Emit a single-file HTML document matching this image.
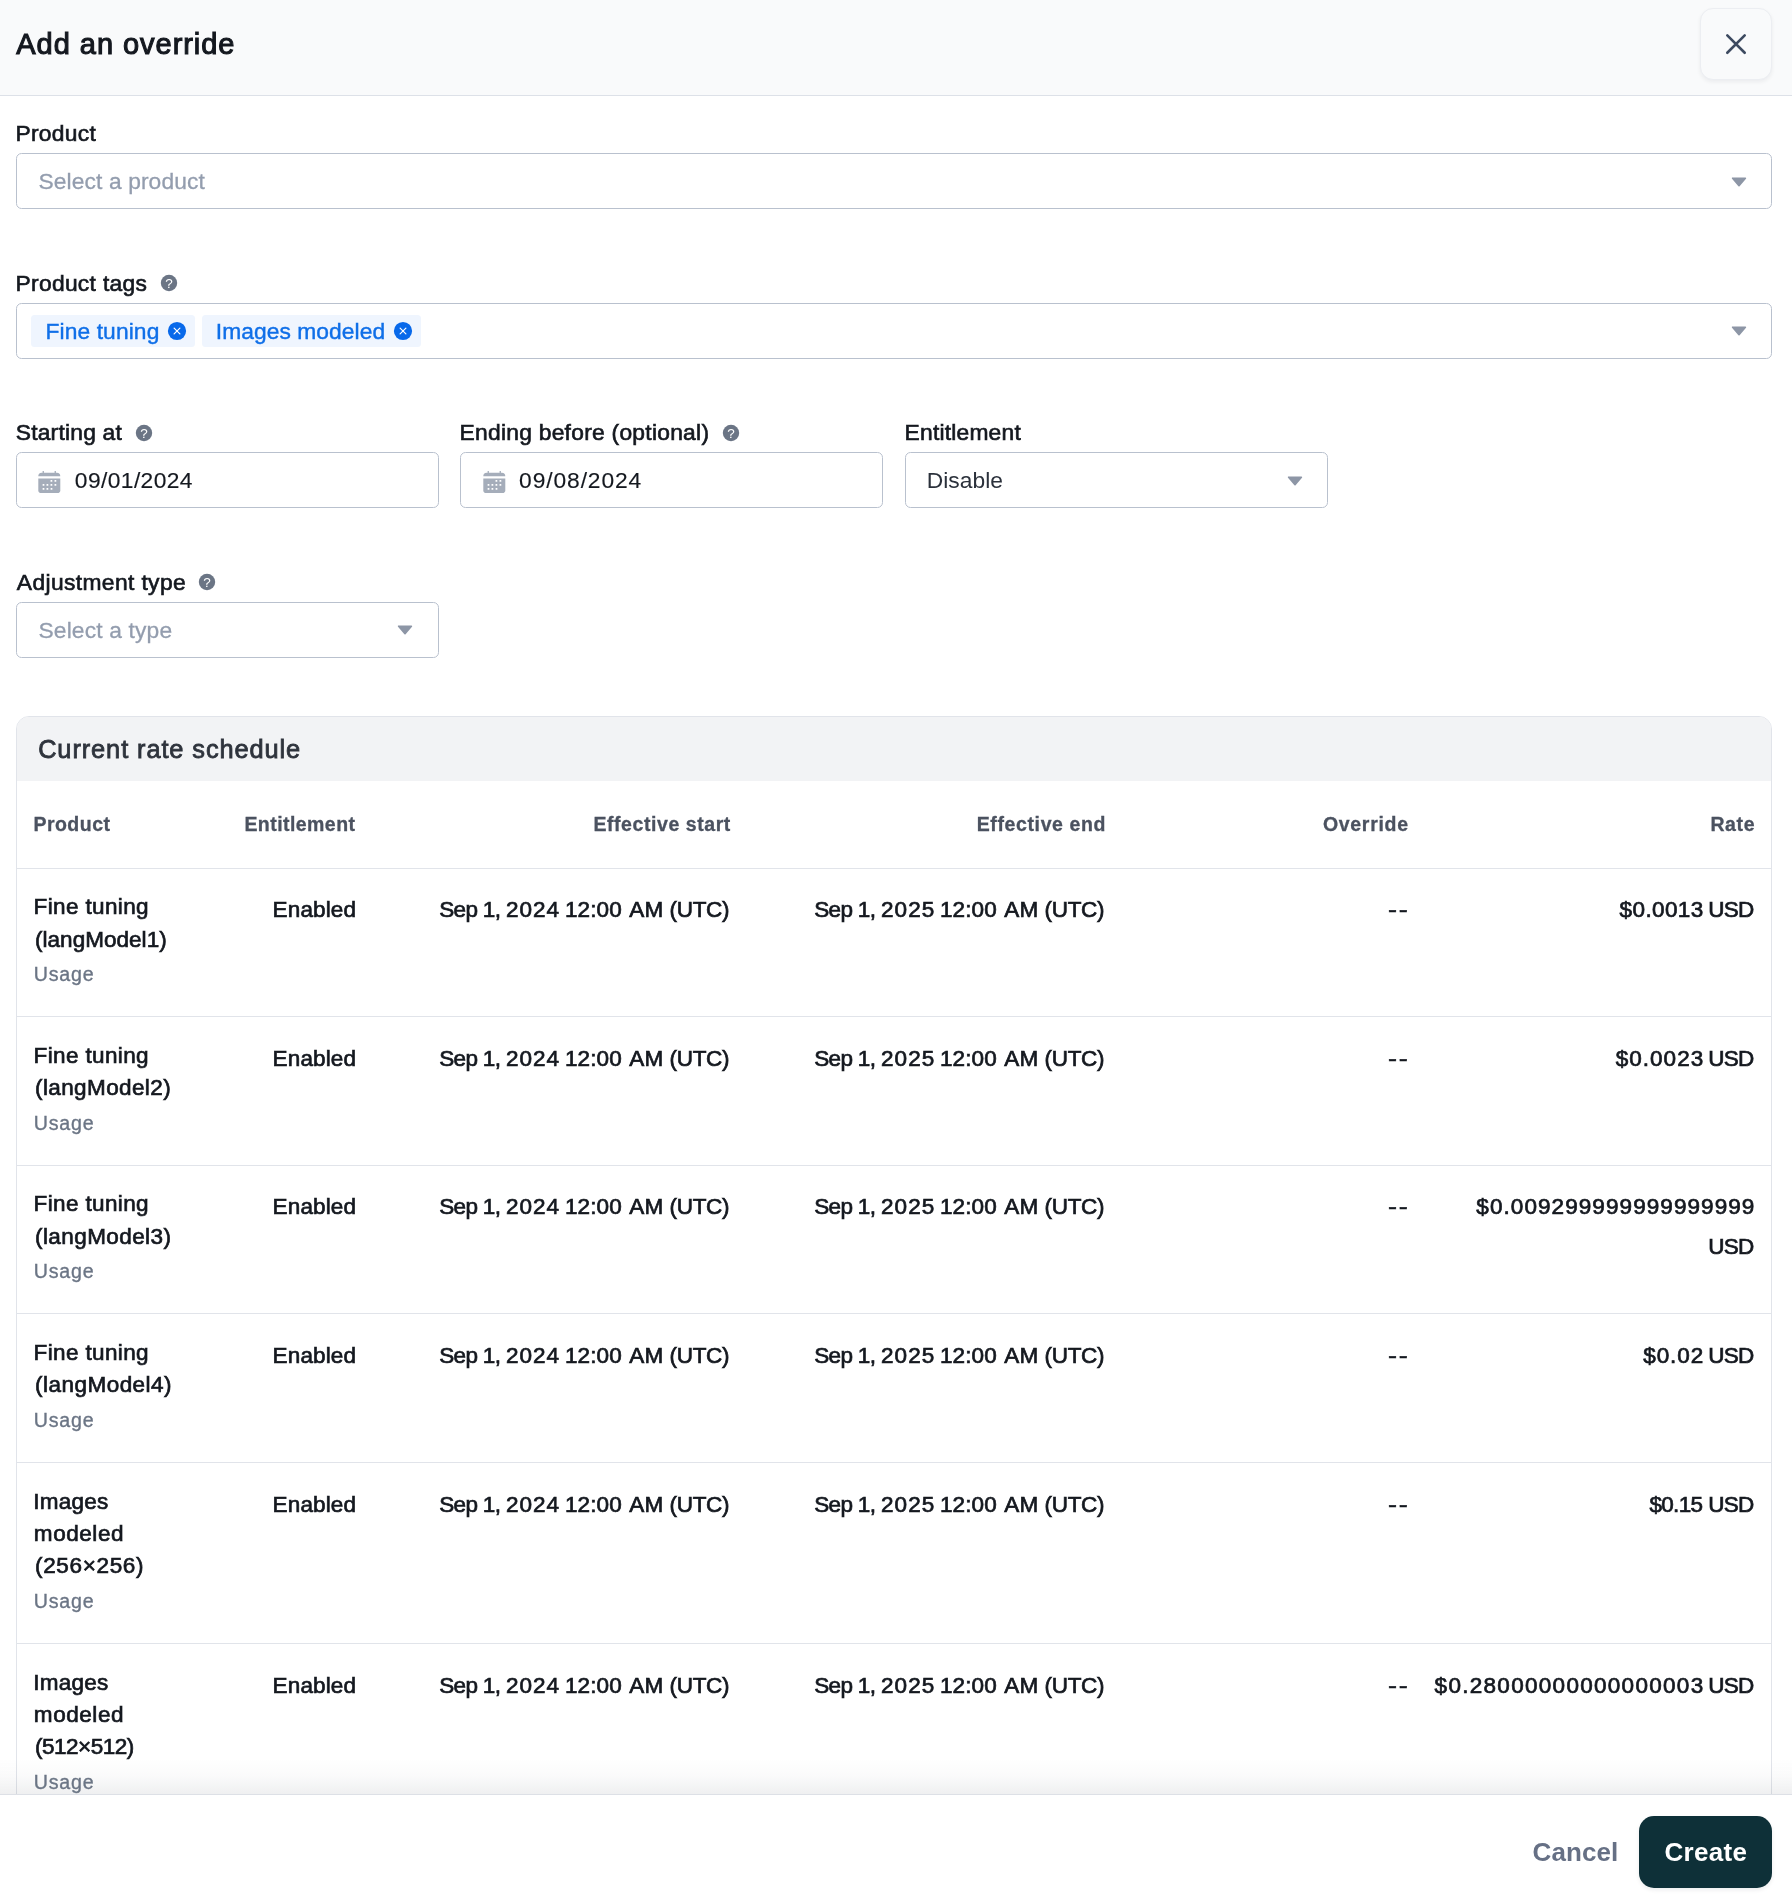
<!DOCTYPE html>
<html lang="en"><head><meta charset="utf-8"><title>Add an override</title>
<style>
html,body{margin:0;padding:0}
body{width:1792px;height:1904px;position:relative;overflow:hidden;background:#fff;font-family:"Liberation Sans",sans-serif;}
.abs{position:absolute}
.t{position:absolute;white-space:pre;display:block;margin:0;padding:0;border:0;background:none;font-family:inherit;text-align:left}
.layer{position:absolute;left:0;top:0;width:1792px;height:1904px;will-change:transform}
.hdr{position:absolute;left:0;top:0;width:1792px;height:95px;background:#f9fafb;border-bottom:1px solid #dde1e8}
.xbtn{position:absolute;left:1700px;top:8px;width:70px;height:70px;border:1px solid #eceef2;border-radius:13px;background:#f9fafb;box-shadow:0 2px 4px rgba(16,24,40,.06)}
.xbtn svg{position:absolute;left:-1px;top:-1px}
.box{position:absolute;box-sizing:border-box;border:1px solid #b9c1ce;border-radius:5.5px;background:#fff}
.tag{position:absolute;height:32px;background:#eff5fe;border-radius:3.5px}
.card{position:absolute;left:16px;top:716px;width:1756px;height:1300px;box-sizing:border-box;border:1px solid #e1e4ea;border-radius:13px;overflow:hidden;background:#fff}
.cardhdr{height:64px;background:#f2f3f5}
.hline{position:absolute;left:17px;width:1754px;height:1px;background:#e1e4ea}
.fshadow{position:absolute;left:0;top:1758px;width:1792px;height:36px;background:linear-gradient(to bottom,rgba(16,24,40,0) 0%,rgba(16,24,40,.02) 50%,rgba(16,24,40,.065) 100%)}
.footer{position:absolute;left:0;top:1794px;width:1792px;height:110px;background:#fff;border-top:1px solid #dde0e6;box-sizing:border-box}
.create{position:absolute;left:1639px;top:1816px;width:133px;height:72px;border-radius:15px;background:#0e3038;box-shadow:0 2px 4px rgba(16,24,40,.08)}
</style></head>
<body>
<div class="layer">
<div class="hdr"></div>
<div class="xbtn"><svg width="72" height="72" viewBox="0 0 72 72"><path d="M27.3 27.35 L44.7 44.75 M44.7 27.35 L27.3 44.75" stroke="#3d4a60" stroke-width="2.6" stroke-linecap="round" fill="none"/></svg></div>
<svg class="abs" style="left:159.75px;top:273.75px" width="18" height="18" viewBox="0 0 18 18"><circle cx="9" cy="9" r="8.2" fill="#6b7585"/><text x="9" y="14.2" text-anchor="middle" font-family="Liberation Sans, sans-serif" font-size="13.5" fill="#fff">?</text></svg>
<svg class="abs" style="left:134.75px;top:423.75px" width="18" height="18" viewBox="0 0 18 18"><circle cx="9" cy="9" r="8.2" fill="#6b7585"/><text x="9" y="14.2" text-anchor="middle" font-family="Liberation Sans, sans-serif" font-size="13.5" fill="#fff">?</text></svg>
<svg class="abs" style="left:721.75px;top:423.75px" width="18" height="18" viewBox="0 0 18 18"><circle cx="9" cy="9" r="8.2" fill="#6b7585"/><text x="9" y="14.2" text-anchor="middle" font-family="Liberation Sans, sans-serif" font-size="13.5" fill="#fff">?</text></svg>
<svg class="abs" style="left:197.75px;top:573px" width="18" height="18" viewBox="0 0 18 18"><circle cx="9" cy="9" r="8.2" fill="#6b7585"/><text x="9" y="14.2" text-anchor="middle" font-family="Liberation Sans, sans-serif" font-size="13.5" fill="#fff">?</text></svg>
<div class="box" style="left:16px;top:153px;width:1756px;height:56px"></div>
<svg class="abs" style="left:1730.2px;top:175.5px" width="18" height="12" viewBox="0 0 18 12"><path d="M2.6 2.2 L15.4 2.2 L9 9.7 Z" fill="#8d96a6" stroke="#8d96a6" stroke-width="1.6" stroke-linejoin="round"/></svg>
<div class="box" style="left:16px;top:303px;width:1756px;height:56px"></div>
<div class="tag" style="left:31px;top:315px;width:164px"></div>
<div class="tag" style="left:202px;top:315px;width:219px"></div>
<svg class="abs" style="left:166.9px;top:320.9px" width="20" height="20" viewBox="0 0 20 20"><circle cx="10" cy="10" r="9.1" fill="#0869ea"/><path d="M7.1 7.1 L12.9 12.9 M12.9 7.1 L7.1 12.9" stroke="#fff" stroke-width="1.2" stroke-linecap="round"/></svg>
<svg class="abs" style="left:392.9px;top:320.9px" width="20" height="20" viewBox="0 0 20 20"><circle cx="10" cy="10" r="9.1" fill="#0869ea"/><path d="M7.1 7.1 L12.9 12.9 M12.9 7.1 L7.1 12.9" stroke="#fff" stroke-width="1.2" stroke-linecap="round"/></svg>
<svg class="abs" style="left:1730.2px;top:325px" width="18" height="12" viewBox="0 0 18 12"><path d="M2.6 2.2 L15.4 2.2 L9 9.7 Z" fill="#8d96a6" stroke="#8d96a6" stroke-width="1.6" stroke-linejoin="round"/></svg>
<div class="box" style="left:16px;top:452px;width:423px;height:56px"></div>
<svg class="abs" style="left:38.4px;top:471.0px" width="23" height="23" viewBox="0 0 23 23"><path d="M0.3 5.3 Q0.3 1.7 3.6 1.7 L4.6 1.7 L4.6 0 L5.9 0 L5.9 1.7 L16.6 1.7 L16.6 0 L17.9 0 L17.9 1.7 L18.9 1.7 Q22.3 1.7 22.3 5.3 Z" fill="#a5adba"/><path d="M0.3 7.6 L22.3 7.6 L22.3 19.3 Q22.3 22.1 19.4 22.1 L3.2 22.1 Q0.3 22.1 0.3 19.3 Z" fill="#a5adba"/><rect x="12.50" y="9.00" width="1.8" height="1.8" rx="0.3" fill="#fff"/><rect x="16.50" y="9.00" width="1.8" height="1.8" rx="0.3" fill="#fff"/><rect x="4.60" y="12.90" width="1.8" height="1.8" rx="0.3" fill="#fff"/><rect x="8.50" y="12.90" width="1.8" height="1.8" rx="0.3" fill="#fff"/><rect x="12.50" y="12.90" width="1.8" height="1.8" rx="0.3" fill="#fff"/><rect x="16.50" y="12.90" width="1.8" height="1.8" rx="0.3" fill="#fff"/><rect x="4.60" y="16.90" width="1.8" height="1.8" rx="0.3" fill="#fff"/><rect x="8.50" y="16.90" width="1.8" height="1.8" rx="0.3" fill="#fff"/><rect x="12.60" y="16.90" width="1.8" height="1.8" rx="0.3" fill="#fff"/></svg>
<div class="box" style="left:460px;top:452px;width:423px;height:56px"></div>
<svg class="abs" style="left:483.4px;top:471.0px" width="23" height="23" viewBox="0 0 23 23"><path d="M0.3 5.3 Q0.3 1.7 3.6 1.7 L4.6 1.7 L4.6 0 L5.9 0 L5.9 1.7 L16.6 1.7 L16.6 0 L17.9 0 L17.9 1.7 L18.9 1.7 Q22.3 1.7 22.3 5.3 Z" fill="#a5adba"/><path d="M0.3 7.6 L22.3 7.6 L22.3 19.3 Q22.3 22.1 19.4 22.1 L3.2 22.1 Q0.3 22.1 0.3 19.3 Z" fill="#a5adba"/><rect x="12.50" y="9.00" width="1.8" height="1.8" rx="0.3" fill="#fff"/><rect x="16.50" y="9.00" width="1.8" height="1.8" rx="0.3" fill="#fff"/><rect x="4.60" y="12.90" width="1.8" height="1.8" rx="0.3" fill="#fff"/><rect x="8.50" y="12.90" width="1.8" height="1.8" rx="0.3" fill="#fff"/><rect x="12.50" y="12.90" width="1.8" height="1.8" rx="0.3" fill="#fff"/><rect x="16.50" y="12.90" width="1.8" height="1.8" rx="0.3" fill="#fff"/><rect x="4.60" y="16.90" width="1.8" height="1.8" rx="0.3" fill="#fff"/><rect x="8.50" y="16.90" width="1.8" height="1.8" rx="0.3" fill="#fff"/><rect x="12.60" y="16.90" width="1.8" height="1.8" rx="0.3" fill="#fff"/></svg>
<div class="box" style="left:905px;top:452px;width:423px;height:56px"></div>
<svg class="abs" style="left:1285.8px;top:475px" width="18" height="12" viewBox="0 0 18 12"><path d="M2.6 2.2 L15.4 2.2 L9 9.7 Z" fill="#8d96a6" stroke="#8d96a6" stroke-width="1.6" stroke-linejoin="round"/></svg>
<div class="box" style="left:16px;top:602px;width:423px;height:56px"></div>
<svg class="abs" style="left:395.8px;top:624px" width="18" height="12" viewBox="0 0 18 12"><path d="M2.6 2.2 L15.4 2.2 L9 9.7 Z" fill="#8d96a6" stroke="#8d96a6" stroke-width="1.6" stroke-linejoin="round"/></svg>
<div class="card"><div class="cardhdr"></div></div>
<div class="hline" style="top:868px"></div>
<div class="hline" style="top:1016px"></div>
<div class="hline" style="top:1165px"></div>
<div class="hline" style="top:1313px"></div>
<div class="hline" style="top:1462px"></div>
<div class="hline" style="top:1643px"></div>
<div class="fshadow"></div><div class="footer"></div>
<div class="create"></div>
<h1 class="t" style="left:16.30px;top:28px;font-size:29.0px;line-height:32px;letter-spacing:0.961px;color:#14181f;font-weight:400;-webkit-text-stroke:1.1px #14181f;">Add an override</h1>
<label class="t" style="left:15.47px;top:120px;font-size:22.8px;line-height:26px;letter-spacing:0.283px;color:#14181f;font-weight:400;-webkit-text-stroke:0.65px #14181f;">Product</label>
<label class="t" style="left:15.47px;top:270px;font-size:22.8px;line-height:26px;letter-spacing:0.314px;color:#14181f;font-weight:400;-webkit-text-stroke:0.65px #14181f;">Product tags</label>
<label class="t" style="left:15.72px;top:419px;font-size:22.8px;line-height:26px;letter-spacing:0.220px;color:#14181f;font-weight:400;-webkit-text-stroke:0.65px #14181f;">Starting at</label>
<label class="t" style="left:459.57px;top:419px;font-size:22.8px;line-height:26px;letter-spacing:0.265px;color:#14181f;font-weight:400;-webkit-text-stroke:0.65px #14181f;">Ending before (optional)</label>
<label class="t" style="left:904.58px;top:419px;font-size:22.8px;line-height:26px;letter-spacing:0.210px;color:#14181f;font-weight:400;-webkit-text-stroke:0.65px #14181f;">Entitlement</label>
<label class="t" style="left:16.82px;top:569px;font-size:22.8px;line-height:26px;letter-spacing:0.382px;color:#14181f;font-weight:400;-webkit-text-stroke:0.65px #14181f;">Adjustment type</label>
<span class="t" style="left:38.45px;top:168px;font-size:22.8px;line-height:26px;letter-spacing:0.110px;color:#939dae;font-weight:400;-webkit-text-stroke:0.3px #939dae;">Select a product</span>
<span class="t" style="left:45.45px;top:318px;font-size:22.8px;line-height:26px;letter-spacing:0.110px;color:#0f6fe8;font-weight:400;-webkit-text-stroke:0.4px #0f6fe8;">Fine tuning</span>
<span class="t" style="left:215.80px;top:318px;font-size:22.8px;line-height:26px;letter-spacing:0.058px;color:#0f6fe8;font-weight:400;-webkit-text-stroke:0.4px #0f6fe8;">Images modeled</span>
<span class="t" style="left:74.83px;top:467px;font-size:22.8px;line-height:26px;letter-spacing:0.400px;color:#14181f;font-weight:400;-webkit-text-stroke:0.15px #14181f;">09/01/2024</span>
<span class="t" style="left:519.12px;top:467px;font-size:22.8px;line-height:26px;letter-spacing:0.894px;color:#14181f;font-weight:400;-webkit-text-stroke:0.15px #14181f;">09/08/2024</span>
<span class="t" style="left:926.75px;top:467px;font-size:22.8px;line-height:26px;letter-spacing:0.042px;color:#2b313b;font-weight:400;">Disable</span>
<span class="t" style="left:38.45px;top:617px;font-size:22.8px;line-height:26px;letter-spacing:0.158px;color:#939dae;font-weight:400;-webkit-text-stroke:0.3px #939dae;">Select a type</span>
<span class="t" style="left:38.15px;top:735px;font-size:25.4px;line-height:28px;letter-spacing:0.897px;color:#2e333c;font-weight:400;-webkit-text-stroke:0.8px #2e333c;">Current rate schedule</span>
<span class="t" style="left:33.40px;top:813px;font-size:19.5px;line-height:22px;letter-spacing:0.492px;color:#4b5260;font-weight:700;-webkit-text-stroke:0.3px #4b5260;">Product</span>
<span class="t" style="left:244.40px;top:813px;font-size:19.5px;line-height:22px;letter-spacing:0.445px;color:#4b5260;font-weight:700;-webkit-text-stroke:0.3px #4b5260;">Entitlement</span>
<span class="t" style="left:593.40px;top:813px;font-size:19.5px;line-height:22px;letter-spacing:0.571px;color:#4b5260;font-weight:700;-webkit-text-stroke:0.3px #4b5260;">Effective start</span>
<span class="t" style="left:976.70px;top:813px;font-size:19.5px;line-height:22px;letter-spacing:0.621px;color:#4b5260;font-weight:700;-webkit-text-stroke:0.3px #4b5260;">Effective end</span>
<span class="t" style="left:1322.90px;top:813px;font-size:19.5px;line-height:22px;letter-spacing:0.707px;color:#4b5260;font-weight:700;-webkit-text-stroke:0.3px #4b5260;">Override</span>
<span class="t" style="left:1710.40px;top:813px;font-size:19.5px;line-height:22px;letter-spacing:0.650px;color:#4b5260;font-weight:700;-webkit-text-stroke:0.3px #4b5260;">Rate</span>
<span class="t" style="left:33.60px;top:894px;font-size:22.5px;line-height:25px;letter-spacing:0.365px;color:#14181f;font-weight:400;-webkit-text-stroke:0.7px #14181f;">Fine tuning</span>
<span class="t" style="left:35.00px;top:927px;font-size:22.5px;line-height:25px;letter-spacing:0.032px;color:#14181f;font-weight:400;-webkit-text-stroke:0.7px #14181f;">(langModel1)</span>
<span class="t" style="left:33.67px;top:963px;font-size:19.6px;line-height:22px;letter-spacing:0.850px;color:#6b7585;font-weight:400;-webkit-text-stroke:0.35px #6b7585;">Usage</span>
<span class="t" style="left:272.60px;top:897px;font-size:22.5px;line-height:25px;letter-spacing:0.133px;color:#14181f;font-weight:400;-webkit-text-stroke:0.7px #14181f;">Enabled</span>
<span class="t" style="left:439.25px;top:897px;font-size:22.5px;line-height:25px;letter-spacing:-0.680px;color:#14181f;font-weight:400;-webkit-text-stroke:0.7px #14181f;">Sep 1,</span>
<span class="t" style="left:505.95px;top:897px;font-size:22.5px;line-height:25px;letter-spacing:1.033px;color:#14181f;font-weight:400;-webkit-text-stroke:0.7px #14181f;">2024</span>
<span class="t" style="left:564.90px;top:897px;font-size:22.5px;line-height:25px;letter-spacing:0.113px;color:#14181f;font-weight:400;-webkit-text-stroke:0.7px #14181f;">12:00</span>
<span class="t" style="left:629.35px;top:897px;font-size:22.5px;line-height:25px;letter-spacing:0.100px;color:#14181f;font-weight:400;-webkit-text-stroke:0.7px #14181f;">AM</span>
<span class="t" style="left:669.60px;top:897px;font-size:22.5px;line-height:25px;letter-spacing:-0.325px;color:#14181f;font-weight:400;-webkit-text-stroke:0.7px #14181f;">(UTC)</span>
<span class="t" style="left:814.25px;top:897px;font-size:22.5px;line-height:25px;letter-spacing:-0.680px;color:#14181f;font-weight:400;-webkit-text-stroke:0.7px #14181f;">Sep 1,</span>
<span class="t" style="left:880.95px;top:897px;font-size:22.5px;line-height:25px;letter-spacing:1.117px;color:#14181f;font-weight:400;-webkit-text-stroke:0.7px #14181f;">2025</span>
<span class="t" style="left:939.90px;top:897px;font-size:22.5px;line-height:25px;letter-spacing:0.113px;color:#14181f;font-weight:400;-webkit-text-stroke:0.7px #14181f;">12:00</span>
<span class="t" style="left:1004.35px;top:897px;font-size:22.5px;line-height:25px;letter-spacing:0.100px;color:#14181f;font-weight:400;-webkit-text-stroke:0.7px #14181f;">AM</span>
<span class="t" style="left:1044.60px;top:897px;font-size:22.5px;line-height:25px;letter-spacing:-0.325px;color:#14181f;font-weight:400;-webkit-text-stroke:0.7px #14181f;">(UTC)</span>
<span class="t" style="left:1387.70px;top:897px;font-size:22.5px;line-height:25px;letter-spacing:1.500px;color:#14181f;font-weight:400;transform:scaleX(1.2);transform-origin:0 0;-webkit-text-stroke:0.5px #14181f;">--</span>
<span class="t" style="left:1619.60px;top:897px;font-size:22.5px;line-height:25px;letter-spacing:0.383px;color:#14181f;font-weight:400;-webkit-text-stroke:0.7px #14181f;">$0.0013</span>
<span class="t" style="left:1708.30px;top:897px;font-size:22.5px;line-height:25px;letter-spacing:-0.725px;color:#14181f;font-weight:400;-webkit-text-stroke:0.7px #14181f;">USD</span>
<span class="t" style="left:33.60px;top:1043px;font-size:22.5px;line-height:25px;letter-spacing:0.365px;color:#14181f;font-weight:400;-webkit-text-stroke:0.7px #14181f;">Fine tuning</span>
<span class="t" style="left:35.00px;top:1075px;font-size:22.5px;line-height:25px;letter-spacing:0.395px;color:#14181f;font-weight:400;-webkit-text-stroke:0.7px #14181f;">(langModel2)</span>
<span class="t" style="left:33.67px;top:1112px;font-size:19.6px;line-height:22px;letter-spacing:0.850px;color:#6b7585;font-weight:400;-webkit-text-stroke:0.35px #6b7585;">Usage</span>
<span class="t" style="left:272.60px;top:1046px;font-size:22.5px;line-height:25px;letter-spacing:0.133px;color:#14181f;font-weight:400;-webkit-text-stroke:0.7px #14181f;">Enabled</span>
<span class="t" style="left:439.25px;top:1046px;font-size:22.5px;line-height:25px;letter-spacing:-0.680px;color:#14181f;font-weight:400;-webkit-text-stroke:0.7px #14181f;">Sep 1,</span>
<span class="t" style="left:505.95px;top:1046px;font-size:22.5px;line-height:25px;letter-spacing:1.033px;color:#14181f;font-weight:400;-webkit-text-stroke:0.7px #14181f;">2024</span>
<span class="t" style="left:564.90px;top:1046px;font-size:22.5px;line-height:25px;letter-spacing:0.113px;color:#14181f;font-weight:400;-webkit-text-stroke:0.7px #14181f;">12:00</span>
<span class="t" style="left:629.35px;top:1046px;font-size:22.5px;line-height:25px;letter-spacing:0.100px;color:#14181f;font-weight:400;-webkit-text-stroke:0.7px #14181f;">AM</span>
<span class="t" style="left:669.60px;top:1046px;font-size:22.5px;line-height:25px;letter-spacing:-0.325px;color:#14181f;font-weight:400;-webkit-text-stroke:0.7px #14181f;">(UTC)</span>
<span class="t" style="left:814.25px;top:1046px;font-size:22.5px;line-height:25px;letter-spacing:-0.680px;color:#14181f;font-weight:400;-webkit-text-stroke:0.7px #14181f;">Sep 1,</span>
<span class="t" style="left:880.95px;top:1046px;font-size:22.5px;line-height:25px;letter-spacing:1.117px;color:#14181f;font-weight:400;-webkit-text-stroke:0.7px #14181f;">2025</span>
<span class="t" style="left:939.90px;top:1046px;font-size:22.5px;line-height:25px;letter-spacing:0.113px;color:#14181f;font-weight:400;-webkit-text-stroke:0.7px #14181f;">12:00</span>
<span class="t" style="left:1004.35px;top:1046px;font-size:22.5px;line-height:25px;letter-spacing:0.100px;color:#14181f;font-weight:400;-webkit-text-stroke:0.7px #14181f;">AM</span>
<span class="t" style="left:1044.60px;top:1046px;font-size:22.5px;line-height:25px;letter-spacing:-0.325px;color:#14181f;font-weight:400;-webkit-text-stroke:0.7px #14181f;">(UTC)</span>
<span class="t" style="left:1387.70px;top:1046px;font-size:22.5px;line-height:25px;letter-spacing:1.500px;color:#14181f;font-weight:400;transform:scaleX(1.2);transform-origin:0 0;-webkit-text-stroke:0.5px #14181f;">--</span>
<span class="t" style="left:1615.70px;top:1046px;font-size:22.5px;line-height:25px;letter-spacing:1.033px;color:#14181f;font-weight:400;-webkit-text-stroke:0.7px #14181f;">$0.0023</span>
<span class="t" style="left:1708.30px;top:1046px;font-size:22.5px;line-height:25px;letter-spacing:-0.725px;color:#14181f;font-weight:400;-webkit-text-stroke:0.7px #14181f;">USD</span>
<span class="t" style="left:33.60px;top:1191px;font-size:22.5px;line-height:25px;letter-spacing:0.365px;color:#14181f;font-weight:400;-webkit-text-stroke:0.7px #14181f;">Fine tuning</span>
<span class="t" style="left:35.00px;top:1224px;font-size:22.5px;line-height:25px;letter-spacing:0.423px;color:#14181f;font-weight:400;-webkit-text-stroke:0.7px #14181f;">(langModel3)</span>
<span class="t" style="left:33.67px;top:1260px;font-size:19.6px;line-height:22px;letter-spacing:0.850px;color:#6b7585;font-weight:400;-webkit-text-stroke:0.35px #6b7585;">Usage</span>
<span class="t" style="left:272.60px;top:1194px;font-size:22.5px;line-height:25px;letter-spacing:0.133px;color:#14181f;font-weight:400;-webkit-text-stroke:0.7px #14181f;">Enabled</span>
<span class="t" style="left:439.25px;top:1194px;font-size:22.5px;line-height:25px;letter-spacing:-0.680px;color:#14181f;font-weight:400;-webkit-text-stroke:0.7px #14181f;">Sep 1,</span>
<span class="t" style="left:505.95px;top:1194px;font-size:22.5px;line-height:25px;letter-spacing:1.033px;color:#14181f;font-weight:400;-webkit-text-stroke:0.7px #14181f;">2024</span>
<span class="t" style="left:564.90px;top:1194px;font-size:22.5px;line-height:25px;letter-spacing:0.113px;color:#14181f;font-weight:400;-webkit-text-stroke:0.7px #14181f;">12:00</span>
<span class="t" style="left:629.35px;top:1194px;font-size:22.5px;line-height:25px;letter-spacing:0.100px;color:#14181f;font-weight:400;-webkit-text-stroke:0.7px #14181f;">AM</span>
<span class="t" style="left:669.60px;top:1194px;font-size:22.5px;line-height:25px;letter-spacing:-0.325px;color:#14181f;font-weight:400;-webkit-text-stroke:0.7px #14181f;">(UTC)</span>
<span class="t" style="left:814.25px;top:1194px;font-size:22.5px;line-height:25px;letter-spacing:-0.680px;color:#14181f;font-weight:400;-webkit-text-stroke:0.7px #14181f;">Sep 1,</span>
<span class="t" style="left:880.95px;top:1194px;font-size:22.5px;line-height:25px;letter-spacing:1.117px;color:#14181f;font-weight:400;-webkit-text-stroke:0.7px #14181f;">2025</span>
<span class="t" style="left:939.90px;top:1194px;font-size:22.5px;line-height:25px;letter-spacing:0.113px;color:#14181f;font-weight:400;-webkit-text-stroke:0.7px #14181f;">12:00</span>
<span class="t" style="left:1004.35px;top:1194px;font-size:22.5px;line-height:25px;letter-spacing:0.100px;color:#14181f;font-weight:400;-webkit-text-stroke:0.7px #14181f;">AM</span>
<span class="t" style="left:1044.60px;top:1194px;font-size:22.5px;line-height:25px;letter-spacing:-0.325px;color:#14181f;font-weight:400;-webkit-text-stroke:0.7px #14181f;">(UTC)</span>
<span class="t" style="left:1387.70px;top:1194px;font-size:22.5px;line-height:25px;letter-spacing:1.500px;color:#14181f;font-weight:400;transform:scaleX(1.2);transform-origin:0 0;-webkit-text-stroke:0.5px #14181f;">--</span>
<span class="t" style="left:1476.30px;top:1194px;font-size:22.5px;line-height:25px;letter-spacing:1.078px;color:#14181f;font-weight:400;-webkit-text-stroke:0.7px #14181f;">$0.009299999999999999</span>
<span class="t" style="left:1708.30px;top:1234px;font-size:22.5px;line-height:25px;letter-spacing:-0.725px;color:#14181f;font-weight:400;-webkit-text-stroke:0.7px #14181f;">USD</span>
<span class="t" style="left:33.60px;top:1340px;font-size:22.5px;line-height:25px;letter-spacing:0.365px;color:#14181f;font-weight:400;-webkit-text-stroke:0.7px #14181f;">Fine tuning</span>
<span class="t" style="left:35.00px;top:1372px;font-size:22.5px;line-height:25px;letter-spacing:0.477px;color:#14181f;font-weight:400;-webkit-text-stroke:0.7px #14181f;">(langModel4)</span>
<span class="t" style="left:33.67px;top:1409px;font-size:19.6px;line-height:22px;letter-spacing:0.850px;color:#6b7585;font-weight:400;-webkit-text-stroke:0.35px #6b7585;">Usage</span>
<span class="t" style="left:272.60px;top:1343px;font-size:22.5px;line-height:25px;letter-spacing:0.133px;color:#14181f;font-weight:400;-webkit-text-stroke:0.7px #14181f;">Enabled</span>
<span class="t" style="left:439.25px;top:1343px;font-size:22.5px;line-height:25px;letter-spacing:-0.680px;color:#14181f;font-weight:400;-webkit-text-stroke:0.7px #14181f;">Sep 1,</span>
<span class="t" style="left:505.95px;top:1343px;font-size:22.5px;line-height:25px;letter-spacing:1.033px;color:#14181f;font-weight:400;-webkit-text-stroke:0.7px #14181f;">2024</span>
<span class="t" style="left:564.90px;top:1343px;font-size:22.5px;line-height:25px;letter-spacing:0.113px;color:#14181f;font-weight:400;-webkit-text-stroke:0.7px #14181f;">12:00</span>
<span class="t" style="left:629.35px;top:1343px;font-size:22.5px;line-height:25px;letter-spacing:0.100px;color:#14181f;font-weight:400;-webkit-text-stroke:0.7px #14181f;">AM</span>
<span class="t" style="left:669.60px;top:1343px;font-size:22.5px;line-height:25px;letter-spacing:-0.325px;color:#14181f;font-weight:400;-webkit-text-stroke:0.7px #14181f;">(UTC)</span>
<span class="t" style="left:814.25px;top:1343px;font-size:22.5px;line-height:25px;letter-spacing:-0.680px;color:#14181f;font-weight:400;-webkit-text-stroke:0.7px #14181f;">Sep 1,</span>
<span class="t" style="left:880.95px;top:1343px;font-size:22.5px;line-height:25px;letter-spacing:1.117px;color:#14181f;font-weight:400;-webkit-text-stroke:0.7px #14181f;">2025</span>
<span class="t" style="left:939.90px;top:1343px;font-size:22.5px;line-height:25px;letter-spacing:0.113px;color:#14181f;font-weight:400;-webkit-text-stroke:0.7px #14181f;">12:00</span>
<span class="t" style="left:1004.35px;top:1343px;font-size:22.5px;line-height:25px;letter-spacing:0.100px;color:#14181f;font-weight:400;-webkit-text-stroke:0.7px #14181f;">AM</span>
<span class="t" style="left:1044.60px;top:1343px;font-size:22.5px;line-height:25px;letter-spacing:-0.325px;color:#14181f;font-weight:400;-webkit-text-stroke:0.7px #14181f;">(UTC)</span>
<span class="t" style="left:1387.70px;top:1343px;font-size:22.5px;line-height:25px;letter-spacing:1.500px;color:#14181f;font-weight:400;transform:scaleX(1.2);transform-origin:0 0;-webkit-text-stroke:0.5px #14181f;">--</span>
<span class="t" style="left:1643.30px;top:1343px;font-size:22.5px;line-height:25px;letter-spacing:0.900px;color:#14181f;font-weight:400;-webkit-text-stroke:0.7px #14181f;">$0.02</span>
<span class="t" style="left:1708.30px;top:1343px;font-size:22.5px;line-height:25px;letter-spacing:-0.725px;color:#14181f;font-weight:400;-webkit-text-stroke:0.7px #14181f;">USD</span>
<span class="t" style="left:33.35px;top:1489px;font-size:22.5px;line-height:25px;letter-spacing:0.200px;color:#14181f;font-weight:400;-webkit-text-stroke:0.7px #14181f;">Images</span>
<span class="t" style="left:33.85px;top:1521px;font-size:22.5px;line-height:25px;letter-spacing:0.550px;color:#14181f;font-weight:400;-webkit-text-stroke:0.7px #14181f;">modeled</span>
<span class="t" style="left:35.00px;top:1553px;font-size:22.5px;line-height:25px;letter-spacing:0.662px;color:#14181f;font-weight:400;-webkit-text-stroke:0.7px #14181f;">(256×256)</span>
<span class="t" style="left:33.67px;top:1590px;font-size:19.6px;line-height:22px;letter-spacing:0.850px;color:#6b7585;font-weight:400;-webkit-text-stroke:0.35px #6b7585;">Usage</span>
<span class="t" style="left:272.60px;top:1492px;font-size:22.5px;line-height:25px;letter-spacing:0.133px;color:#14181f;font-weight:400;-webkit-text-stroke:0.7px #14181f;">Enabled</span>
<span class="t" style="left:439.25px;top:1492px;font-size:22.5px;line-height:25px;letter-spacing:-0.680px;color:#14181f;font-weight:400;-webkit-text-stroke:0.7px #14181f;">Sep 1,</span>
<span class="t" style="left:505.95px;top:1492px;font-size:22.5px;line-height:25px;letter-spacing:1.033px;color:#14181f;font-weight:400;-webkit-text-stroke:0.7px #14181f;">2024</span>
<span class="t" style="left:564.90px;top:1492px;font-size:22.5px;line-height:25px;letter-spacing:0.113px;color:#14181f;font-weight:400;-webkit-text-stroke:0.7px #14181f;">12:00</span>
<span class="t" style="left:629.35px;top:1492px;font-size:22.5px;line-height:25px;letter-spacing:0.100px;color:#14181f;font-weight:400;-webkit-text-stroke:0.7px #14181f;">AM</span>
<span class="t" style="left:669.60px;top:1492px;font-size:22.5px;line-height:25px;letter-spacing:-0.325px;color:#14181f;font-weight:400;-webkit-text-stroke:0.7px #14181f;">(UTC)</span>
<span class="t" style="left:814.25px;top:1492px;font-size:22.5px;line-height:25px;letter-spacing:-0.680px;color:#14181f;font-weight:400;-webkit-text-stroke:0.7px #14181f;">Sep 1,</span>
<span class="t" style="left:880.95px;top:1492px;font-size:22.5px;line-height:25px;letter-spacing:1.117px;color:#14181f;font-weight:400;-webkit-text-stroke:0.7px #14181f;">2025</span>
<span class="t" style="left:939.90px;top:1492px;font-size:22.5px;line-height:25px;letter-spacing:0.113px;color:#14181f;font-weight:400;-webkit-text-stroke:0.7px #14181f;">12:00</span>
<span class="t" style="left:1004.35px;top:1492px;font-size:22.5px;line-height:25px;letter-spacing:0.100px;color:#14181f;font-weight:400;-webkit-text-stroke:0.7px #14181f;">AM</span>
<span class="t" style="left:1044.60px;top:1492px;font-size:22.5px;line-height:25px;letter-spacing:-0.325px;color:#14181f;font-weight:400;-webkit-text-stroke:0.7px #14181f;">(UTC)</span>
<span class="t" style="left:1387.70px;top:1492px;font-size:22.5px;line-height:25px;letter-spacing:1.500px;color:#14181f;font-weight:400;transform:scaleX(1.2);transform-origin:0 0;-webkit-text-stroke:0.5px #14181f;">--</span>
<span class="t" style="left:1649.50px;top:1492px;font-size:22.5px;line-height:25px;letter-spacing:-0.713px;color:#14181f;font-weight:400;-webkit-text-stroke:0.7px #14181f;">$0.15</span>
<span class="t" style="left:1708.30px;top:1492px;font-size:22.5px;line-height:25px;letter-spacing:-0.725px;color:#14181f;font-weight:400;-webkit-text-stroke:0.7px #14181f;">USD</span>
<span class="t" style="left:33.35px;top:1670px;font-size:22.5px;line-height:25px;letter-spacing:0.200px;color:#14181f;font-weight:400;-webkit-text-stroke:0.7px #14181f;">Images</span>
<span class="t" style="left:33.85px;top:1702px;font-size:22.5px;line-height:25px;letter-spacing:0.550px;color:#14181f;font-weight:400;-webkit-text-stroke:0.7px #14181f;">modeled</span>
<span class="t" style="left:35.00px;top:1734px;font-size:22.5px;line-height:25px;letter-spacing:-0.488px;color:#14181f;font-weight:400;-webkit-text-stroke:0.7px #14181f;">(512×512)</span>
<span class="t" style="left:33.67px;top:1771px;font-size:19.6px;line-height:22px;letter-spacing:0.850px;color:#6b7585;font-weight:400;-webkit-text-stroke:0.35px #6b7585;">Usage</span>
<span class="t" style="left:272.60px;top:1673px;font-size:22.5px;line-height:25px;letter-spacing:0.133px;color:#14181f;font-weight:400;-webkit-text-stroke:0.7px #14181f;">Enabled</span>
<span class="t" style="left:439.25px;top:1673px;font-size:22.5px;line-height:25px;letter-spacing:-0.680px;color:#14181f;font-weight:400;-webkit-text-stroke:0.7px #14181f;">Sep 1,</span>
<span class="t" style="left:505.95px;top:1673px;font-size:22.5px;line-height:25px;letter-spacing:1.033px;color:#14181f;font-weight:400;-webkit-text-stroke:0.7px #14181f;">2024</span>
<span class="t" style="left:564.90px;top:1673px;font-size:22.5px;line-height:25px;letter-spacing:0.113px;color:#14181f;font-weight:400;-webkit-text-stroke:0.7px #14181f;">12:00</span>
<span class="t" style="left:629.35px;top:1673px;font-size:22.5px;line-height:25px;letter-spacing:0.100px;color:#14181f;font-weight:400;-webkit-text-stroke:0.7px #14181f;">AM</span>
<span class="t" style="left:669.60px;top:1673px;font-size:22.5px;line-height:25px;letter-spacing:-0.325px;color:#14181f;font-weight:400;-webkit-text-stroke:0.7px #14181f;">(UTC)</span>
<span class="t" style="left:814.25px;top:1673px;font-size:22.5px;line-height:25px;letter-spacing:-0.680px;color:#14181f;font-weight:400;-webkit-text-stroke:0.7px #14181f;">Sep 1,</span>
<span class="t" style="left:880.95px;top:1673px;font-size:22.5px;line-height:25px;letter-spacing:1.117px;color:#14181f;font-weight:400;-webkit-text-stroke:0.7px #14181f;">2025</span>
<span class="t" style="left:939.90px;top:1673px;font-size:22.5px;line-height:25px;letter-spacing:0.113px;color:#14181f;font-weight:400;-webkit-text-stroke:0.7px #14181f;">12:00</span>
<span class="t" style="left:1004.35px;top:1673px;font-size:22.5px;line-height:25px;letter-spacing:0.100px;color:#14181f;font-weight:400;-webkit-text-stroke:0.7px #14181f;">AM</span>
<span class="t" style="left:1044.60px;top:1673px;font-size:22.5px;line-height:25px;letter-spacing:-0.325px;color:#14181f;font-weight:400;-webkit-text-stroke:0.7px #14181f;">(UTC)</span>
<span class="t" style="left:1387.70px;top:1673px;font-size:22.5px;line-height:25px;letter-spacing:1.500px;color:#14181f;font-weight:400;transform:scaleX(1.2);transform-origin:0 0;-webkit-text-stroke:0.5px #14181f;">--</span>
<span class="t" style="left:1434.60px;top:1673px;font-size:22.5px;line-height:25px;letter-spacing:1.292px;color:#14181f;font-weight:400;-webkit-text-stroke:0.7px #14181f;">$0.28000000000000003</span>
<span class="t" style="left:1708.30px;top:1673px;font-size:22.5px;line-height:25px;letter-spacing:-0.725px;color:#14181f;font-weight:400;-webkit-text-stroke:0.7px #14181f;">USD</span>
<button class="t" style="left:1532.50px;top:1837px;font-size:26px;line-height:30px;letter-spacing:0.100px;color:#667085;font-weight:700;">Cancel</button>
<button class="t" style="left:1664.50px;top:1837px;font-size:26px;line-height:30px;letter-spacing:0.300px;color:#ffffff;font-weight:700;">Create</button>
</div>
</body></html>
